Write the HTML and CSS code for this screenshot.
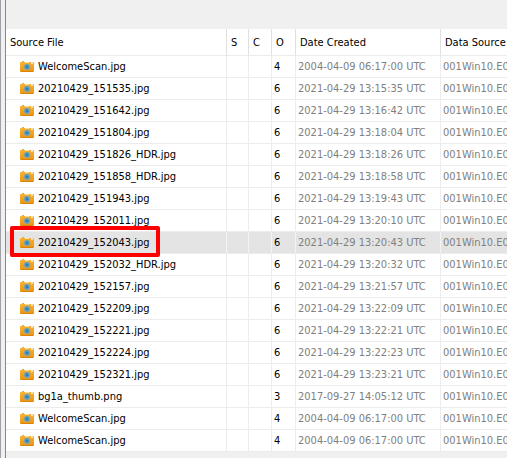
FILE: index.html
```
<!DOCTYPE html>
<html lang="en">
<head>
<meta charset="utf-8">
<title>Source Files</title>
<link rel="stylesheet" href="styles.css">
</head>
<body>
<svg class="defs" aria-hidden="true">
  <defs>
    <linearGradient id="body" x1="0" y1="0" x2="0" y2="1">
      <stop offset="0" stop-color="#f9b233"/>
      <stop offset="1" stop-color="#ee930c"/>
    </linearGradient>
    <symbol id="camera" viewBox="0 0 14 12">
      <path fill="#e0a850" d="M2 0h2v2H2z"/>
      <rect y="1" width="14" height="10" rx="1" fill="url(#body)"/>
      <path fill="#fde0a4" d="M11 1h2v2h-2zM5 1h4v1H5z"/>
      <path fill="#d98408" d="M1 10h12v1H1z"/>
      <circle cx="7" cy="6" r="3.6" fill="#c9a55c"/>
      <circle cx="7" cy="6" r="2.8" fill="#5aa0c4"/>
      <circle cx="7" cy="6" r="1.4" fill="#2f7fb4"/>
    </symbol>
  </defs>
</svg>
<main class="window">
  <div class="splitter"></div>
  <div class="pane">
    <table class="results">
      <colgroup><col class="c-file"><col class="c-s"><col class="c-c"><col class="c-o"><col class="c-date"><col></colgroup>
      <thead><tr><th>Source File</th><th>S</th><th>C</th><th>O</th><th>Date Created</th><th>Data Source</th></tr></thead>
      <tbody id="rows"></tbody>
    </table>
  </div>
</main>
<script src="rows.js"></script>
</body>
</html>
```
FILE: rows.js
```
const files = [
  ["WelcomeScan.jpg", 4, "2004-04-09 06:17:00"],
  ["20210429_151535.jpg", 6, "2021-04-29 13:15:35"],
  ["20210429_151642.jpg", 6, "2021-04-29 13:16:42"],
  ["20210429_151804.jpg", 6, "2021-04-29 13:18:04"],
  ["20210429_151826_HDR.jpg", 6, "2021-04-29 13:18:26"],
  ["20210429_151858_HDR.jpg", 6, "2021-04-29 13:18:58"],
  ["20210429_151943.jpg", 6, "2021-04-29 13:19:43"],
  ["20210429_152011.jpg", 6, "2021-04-29 13:20:10"],
  ["20210429_152043.jpg", 6, "2021-04-29 13:20:43"],
  ["20210429_152032_HDR.jpg", 6, "2021-04-29 13:20:32"],
  ["20210429_152157.jpg", 6, "2021-04-29 13:21:57"],
  ["20210429_152209.jpg", 6, "2021-04-29 13:22:09"],
  ["20210429_152221.jpg", 6, "2021-04-29 13:22:21"],
  ["20210429_152224.jpg", 6, "2021-04-29 13:22:23"],
  ["20210429_152321.jpg", 6, "2021-04-29 13:23:21"],
  ["bg1a_thumb.png", 3, "2017-09-27 14:05:12"],
  ["WelcomeScan.jpg", 4, "2004-04-09 06:17:00"],
  ["WelcomeScan.jpg", 4, "2004-04-09 06:17:00"]
];
const selected = 8;

document.getElementById("rows").innerHTML = files.map(([name, count, date], i) => `
  <tr${i === selected ? ' class="selected"' : ""}>
    <td class="file"><div class="name"><svg class="icon" aria-hidden="true"><use href="#camera"/></svg><span>${name}</span></div></td>
    <td></td><td></td><td>${count}</td>
    <td class="muted">${date} UTC</td><td class="muted">001Win10.E0</td>
  </tr>`).join("");
```
FILE: styles.css
```
*, *::after { box-sizing: border-box; }

body {
  margin: 0;
  background: #f0f0f0;
  color: #000;
  font: 11px/14px "DejaVu Sans Condensed", "DejaVu Sans", sans-serif;
}

.defs { position: absolute; width: 0; height: 0; }

.window {
  display: flex;
  min-height: 100vh;
}

.splitter {
  flex: 0 0 6px;
  border-left: 1px solid #a0a0a8;
  border-right: 1px solid #828790;
}

.pane {
  flex: 1;
  min-width: 0;
  padding-top: 29px;
}

.results {
  width: 100%;
  table-layout: fixed;
  border-collapse: separate;
  border-spacing: 0;
  background: #fff;
}

.c-file { width: 221px; }
.c-s { width: 22px; }
.c-c { width: 23px; }
.c-o { width: 24px; }
.c-date { width: 145px; }

th, td {
  padding: 0 2px;
  border-right: 1px solid #ececec;
  border-bottom: 1px solid #ececec;
  text-align: left;
  font-weight: normal;
  white-space: nowrap;
}

th {
  height: 27px;
  padding: 2px 4px 0;
  border-right-color: #e0e0e0;
}

td { height: 22px; }

th:last-child, td:last-child { border-right: 0; }

.muted { color: #808080; }

.selected td {
  background: #e4e4e4;
  border-right-color: #f4f4f4;
}

.file { padding-left: 14px; }

.name {
  display: flex;
  align-items: center;
  gap: 4px;
}

.icon { width: 14px; height: 12px; }

.selected .file { position: relative; }

.selected .file::after {
  content: "";
  position: absolute;
  left: 4px;
  top: -6px;
  width: 150px;
  height: 31px;
  border: 4px solid #fe0000;
  border-radius: 2px;
}
```
